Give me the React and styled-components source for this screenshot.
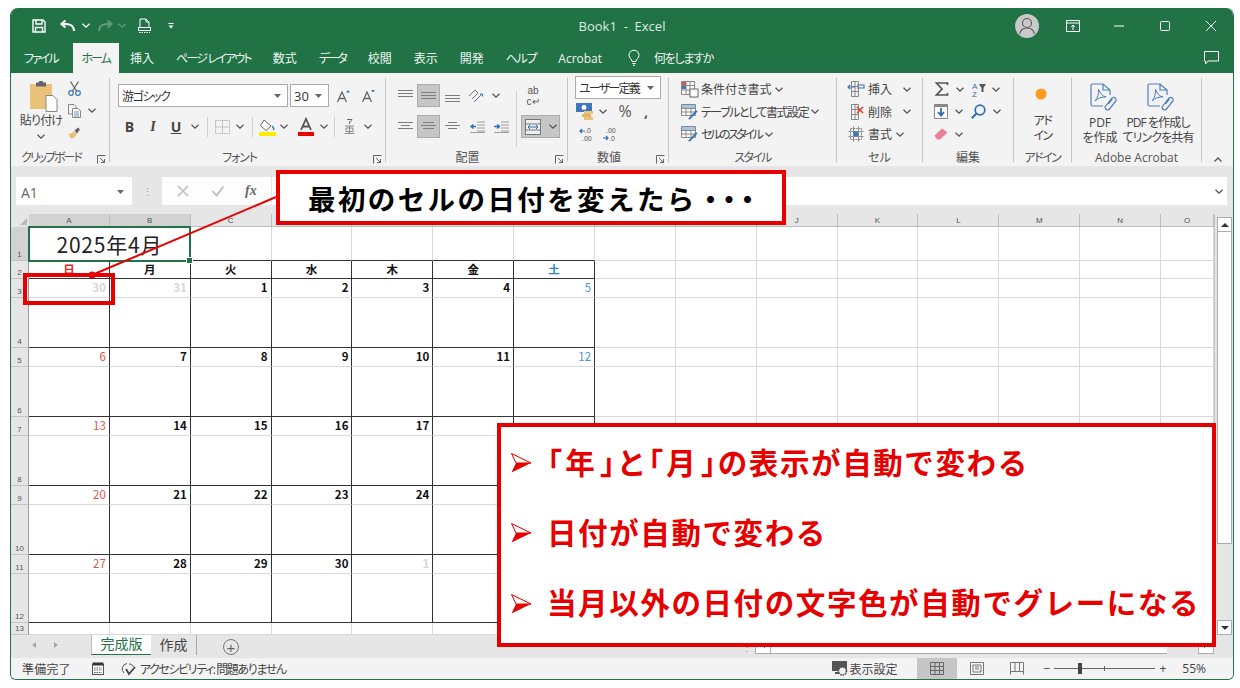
import styled, { createGlobalStyle } from "styled-components"

const GREEN = "#217346"
const RED = "#e60000"
const UI_FONT = `"Open Sans", "Noto Sans CJK JP", sans-serif`
const CJK_FONT = `"Noto Sans CJK JP", sans-serif`

const GlobalStyle = createGlobalStyle`
  html, body { margin: 0; padding: 0; background: #fff; }
  body { font-family: ${UI_FONT}; font-feature-settings: "palt"; color: #444; }
  * { box-sizing: border-box; }
`

/* ---------- small drawings ---------- */

const Svg = styled.svg`
  display: block;
  flex: none;
  overflow: visible;
`

const Chevron = ({ color = "#555", up }) => (
  <Svg width="8" height="5" viewBox="0 0 8 5">
    <polyline points={up ? "0.5,4.5 4,1 7.5,4.5" : "0.5,0.8 4,4.2 7.5,0.8"} fill="none" stroke={color} strokeWidth="1.3" />
  </Svg>
)

const DropArrow = () => (
  <Svg width="7" height="4" viewBox="0 0 7 4"><polygon points="0,0 7,0 3.5,4" fill="#666" /></Svg>
)

const Launcher = () => (
  <Svg width="9" height="9" viewBox="0 0 9 9">
    <path d="M0.5 8.5V0.5H8.5M3 3L7.5 7.5M7.5 4V7.5H4" fill="none" stroke="#666" strokeWidth="1" />
  </Svg>
)

const SaveIcon = () => (
  <Svg width="14" height="14" viewBox="0 0 14 14">
    <path d="M1 1H11L13 3V13H1Z M4 1V5H10V1 M3.5 13V8.5H10.5V13" fill="none" stroke="#fff" strokeWidth="1.4" />
  </Svg>
)

const UndoIcon = ({ color = "#fff" }) => (
  <Svg width="15" height="12" viewBox="0 0 15 12">
    <path d="M14 11C14 6 10 4 6 4H2M5.5 0.5L1.5 4L5.5 7.5" fill="none" stroke={color} strokeWidth="2" />
  </Svg>
)

const RedoIcon = () => (
  <Svg width="15" height="12" viewBox="0 0 15 12">
    <path d="M1 11C1 6 5 4 9 4H13M9.5 0.5L13.5 4L9.5 7.5" fill="none" stroke="#5f9c7b" strokeWidth="2" />
  </Svg>
)

const PreviewIcon = () => (
  <Svg width="13" height="15" viewBox="0 0 13 15">
    <path d="M2 9V1H8L11 4V9M8 1V4H11" fill="none" stroke="#fff" strokeWidth="1" />
    <rect x="0.5" y="9.5" width="12" height="3" fill="none" stroke="#fff" />
    <path d="M1 14.5H12" stroke="#fff" strokeDasharray="1.5 1" />
  </Svg>
)

const CustomizeIcon = () => (
  <Svg width="6" height="6" viewBox="0 0 6 6">
    <path d="M0.5 0.5H5.5" stroke="#fff" />
    <polygon points="0.5,2.5 5.5,2.5 3,5.5" fill="#fff" />
  </Svg>
)

const AvatarIcon = () => (
  <Svg width="24" height="24" viewBox="0 0 24 24">
    <circle cx="12" cy="12" r="12" fill="#c9c9c9" />
    <circle cx="12" cy="9" r="4.5" fill="none" stroke="#555" strokeWidth="1.1" />
    <path d="M4.5 20C5.5 15.5 8 14 12 14S18.5 15.5 19.5 20" fill="none" stroke="#555" strokeWidth="1.1" />
  </Svg>
)

const RibbonModeIcon = () => (
  <Svg width="14" height="12" viewBox="0 0 14 12">
    <path d="M0.5 0.5H13.5V11.5H0.5ZM0.5 3H13.5M7 10V5M5 7L7 5L9 7" fill="none" stroke="#fff" />
  </Svg>
)

const WinIcon = ({ kind }) => (
  <Svg width="12" height="12" viewBox="0 0 12 12">
    {kind === "min" && <path d="M1 6H11" stroke="#fff" />}
    {kind === "max" && <rect x="1.5" y="1.5" width="9" height="9" rx="1" fill="none" stroke="#fff" />}
    {kind === "close" && <path d="M1 1L11 11M11 1L1 11" stroke="#fff" />}
  </Svg>
)

const CommentIcon = () => (
  <Svg width="15" height="14" viewBox="0 0 15 14">
    <path d="M0.5 0.5H14.5V10H4L1.5 13V10H0.5Z" fill="none" stroke="#fff" />
  </Svg>
)

const BulbIcon = () => (
  <Svg width="12" height="16" viewBox="0 0 12 16">
    <path d="M4 11.5C4 9 1 8 1 5.2A5 5 0 0 1 11 5.2C11 8 8 9 8 11.5ZM4.3 13.5H7.7M5 15.3H7" fill="none" stroke="#fff" />
  </Svg>
)

const PasteIcon = () => (
  <Svg width="28" height="31" viewBox="0 0 28 31">
    <rect x="0" y="3" width="22" height="25" fill="#eac27a" />
    <rect x="6" y="1.5" width="10" height="4" fill="#666" />
    <rect x="9" y="0" width="4" height="3" fill="#666" />
    <path d="M16 14.5H23L27 18.5V30.5H16Z" fill="#fff" stroke="#888" />
  </Svg>
)

const ScissorsIcon = () => (
  <Svg width="13" height="15" viewBox="0 0 13 15">
    <path d="M2.5 0.5L8.5 10M10.5 0.5L4.5 10" stroke="#666" strokeWidth="1.3" />
    <circle cx="3" cy="12" r="2.3" fill="none" stroke="#3f76b5" strokeWidth="1.2" />
    <circle cx="10" cy="12" r="2.3" fill="none" stroke="#3f76b5" strokeWidth="1.2" />
  </Svg>
)

const CopyIcon = () => (
  <Svg width="13" height="14" viewBox="0 0 13 14">
    <path d="M0.5 0.5H6L8 2.5V10H0.5Z" fill="#f3f3f3" stroke="#888" />
    <path d="M4.5 4.5H10L12.5 7V13.5H4.5Z" fill="#fff" stroke="#888" />
    <path d="M6 8H11M6 10H11M6 12H11" stroke="#6b8fb8" />
  </Svg>
)

const BrushIcon = () => (
  <Svg width="13" height="12" viewBox="0 0 13 12">
    <path d="M0 7C3 7 5 5 6 4L9 7C8 9 5 12 3 11.5Z" fill="#e9bf78" />
    <path d="M6.5 3.5L10 0.5L12 2.5L9 6.5Z" fill="#666" />
  </Svg>
)

const BorderIcon = () => (
  <Svg width="15" height="14" viewBox="0 0 15 14">
    <path d="M0.5 0.5H14.5V13.5H0.5ZM7.5 0.5V13.5M0.5 7H14.5" fill="none" stroke="#b5b5b5" strokeDasharray="1.5 0.7" />
  </Svg>
)

const FillIcon = () => (
  <Svg width="17" height="18" viewBox="0 0 17 18">
    <path d="M5 2L12 8L7 12.5L1.5 7.5Z" fill="#fff" stroke="#666" />
    <path d="M13 8Q15.5 10 14.5 12" fill="none" stroke="#3f76b5" strokeWidth="1.5" />
    <rect x="0" y="14" width="17" height="4" fill="#ffeb00" />
  </Svg>
)

const FontColorIcon = () => (
  <Svg width="16" height="18" viewBox="0 0 16 18">
    <path d="M3 12L8 1L13 12M5 8.5H11" fill="none" stroke="#555" strokeWidth="1.8" />
    <rect x="0" y="14" width="16" height="4" fill={RED} />
  </Svg>
)

const GrowFontIcon = ({ down }) => (
  <Svg width="14" height="14" viewBox="0 0 14 14">
    <path d="M0.5 13L5 3L9.5 13M2.3 9.5H7.7" fill="none" stroke="#666" strokeWidth="1.3" />
    <polygon points={down ? "9,1 13,1 11,3.5" : "9,3.5 13,3.5 11,1"} fill="#3f76b5" />
  </Svg>
)

const PhoneticIcon = () => (
  <Svg width="11" height="15" viewBox="0 0 11 15">
    <path d="M3 0.5H8C7.5 2 6.5 3 5 3.5M5.5 2.5V5" fill="none" stroke="#666" />
    <path d="M1 7H10M2 9H9V12.5H2ZM5.5 7V14.5M0.5 14.5H10.5" fill="none" stroke="#888" />
  </Svg>
)

// horizontal text lines, used for the alignment buttons
const LinesIcon = ({ rows, inset = [0, 0, 0], height = 12 }) => (
  <Svg width="15" height={height} viewBox={`0 0 15 ${height}`}>
    {rows.map((y, i) => (
      <path key={y} d={`M${inset[i]} ${y}H${15 - inset[i]}`} stroke="#7d7d7d" />
    ))}
  </Svg>
)

const OrientIcon = () => (
  <Svg width="18" height="14" viewBox="0 0 18 14">
    <path d="M1 7L7 1L10 4L4 10" fill="none" stroke="#777" />
    <path d="M6 13L14 5M12 5H14.5V7.5" fill="none" stroke="#3f76b5" />
  </Svg>
)

const IndentIcon = ({ inc }) => (
  <Svg width="15" height="12" viewBox="0 0 15 12">
    <path d="M7 1H15M7 4H15M7 7H15M7 10H15M0 11.5H15" stroke="#888" strokeWidth="0.8" />
    <path d={inc ? "M0 5.5H5M3 3.5L5.5 5.5L3 7.5" : "M6 5.5H1M3.5 3.5L1 5.5L3.5 7.5"} fill="none" stroke="#2d6db3" strokeWidth="1.4" />
  </Svg>
)

const MergeIcon = () => (
  <Svg width="16" height="16" viewBox="0 0 16 16">
    <rect x="0.5" y="0.5" width="15" height="15" fill="#eee" stroke="#777" />
    <path d="M0.5 5H15.5M0.5 11H15.5" stroke="#777" />
    <path d="M3 8H13M5 6L3 8L5 10M11 6L13 8L11 10" fill="none" stroke="#2d6db3" />
  </Svg>
)

const AccountingIcon = () => (
  <Svg width="18" height="17" viewBox="0 0 18 17">
    <rect x="0" y="0" width="16" height="9" fill="#3f76b5" />
    <circle cx="8" cy="4.5" r="2.4" fill="#fff" />
    <rect x="8" y="8" width="9" height="3" fill="#eac27a" />
    <rect x="6" y="11" width="9" height="3" fill="#e4b45f" />
    <rect x="8" y="14" width="9" height="3" fill="#eac27a" />
  </Svg>
)

const DecimalIcon = ({ more }) => (
  <Svg width="14" height="15" viewBox="0 0 14 15">
    <text x={more ? 3 : 5} y="6" fontSize="7" fill="#555" fontFamily="Liberation Sans">{more ? ".00" : ".0"}</text>
    <text x={more ? 6 : 2} y="14" fontSize="7" fill="#555" fontFamily="Liberation Sans">{more ? ".0" : ".00"}</text>
    <path d={more ? "M0 11H5M3 9L5 11L3 13" : "M0 4H5M2 2L0 4L2 6"} fill="none" stroke="#2d6db3" strokeWidth="1.2" />
  </Svg>
)

const CondFormatIcon = () => (
  <Svg width="17" height="16" viewBox="0 0 17 16">
    <path d="M0.5 0.5H13.5V13.5H0.5ZM0.5 4.5H13.5M0.5 9H13.5M5 0.5V13.5M9 0.5V13.5" fill="#fff" stroke="#888" />
    <rect x="1" y="1" width="4" height="3" fill="#d9534f" />
    <rect x="1" y="5" width="4" height="3" fill="#3f76b5" />
    <rect x="9" y="8" width="8" height="8" fill="#fff" stroke="#666" />
  </Svg>
)

const StyleTableIcon = () => (
  <Svg width="17" height="16" viewBox="0 0 17 16">
    <path d="M0.5 0.5H14.5V11.5H0.5ZM0.5 4.5H14.5M0.5 8H14.5M5 0.5V11.5M10 0.5V11.5" fill="#fff" stroke="#888" />
    <rect x="1" y="1" width="13" height="3" fill="#a8c4e3" />
    <path d="M7 15L15 6L16.5 7.5L9 15.5Z" fill="#3f76b5" />
  </Svg>
)

const CellOpIcon = ({ kind }) => (
  <Svg width="16" height="16" viewBox="0 0 16 16">
    {kind === "format" ? (
      <>
        <path d="M2.5 2.5H13.5V13.5H2.5ZM0.5 5.5H15.5M0.5 10.5H15.5M5.5 0.5V15.5M10.5 0.5V15.5" fill="none" stroke="#888" strokeDasharray="2 0.6" />
        <rect x="5.5" y="5.5" width="5" height="5" fill="#3f76b5" />
      </>
    ) : (
      <>
        <path d="M3.5 0.5H10.5V15.5H3.5ZM3.5 5.5H10.5M3.5 10.5H10.5M7 0.5V15.5" fill="none" stroke="#888" />
        {kind === "insert" && <path d="M0 6H7M2 4L0 6L2 8M9 4H16V7H9" fill="none" stroke="#3f76b5" strokeWidth="1.1" />}
        {kind === "delete" && <path d="M9 3L15 9M15 3L9 9" stroke="#d9452f" strokeWidth="1.6" />}
      </>
    )}
  </Svg>
)

const SigmaIcon = () => (
  <Svg width="13" height="14" viewBox="0 0 13 14">
    <path d="M12.5 3V1H1.5L7 7L1.5 13H12.5V11" fill="none" stroke="#555" strokeWidth="1.7" />
  </Svg>
)

const SortIcon = () => (
  <Svg width="15" height="15" viewBox="0 0 15 15">
    <text x="0" y="7" fontSize="8" fill="#2d6db3" fontFamily="Liberation Sans">A</text>
    <text x="0" y="15" fontSize="8" fill="#2d6db3" fontFamily="Liberation Sans">Z</text>
    <polygon points="7,2 14,2 11.5,6 11.5,10 9.5,10 9.5,6" fill="#555" />
  </Svg>
)

const FillDownIcon = () => (
  <Svg width="14" height="15" viewBox="0 0 14 15">
    <rect x="0.5" y="0.5" width="13" height="14" fill="#fff" stroke="#888" />
    <rect x="0.5" y="0.5" width="13" height="2.5" fill="#888" />
    <path d="M7 4V11M4 8L7 11.5L10 8" fill="none" stroke="#2d6db3" strokeWidth="1.8" />
  </Svg>
)

const FindIcon = () => (
  <Svg width="15" height="15" viewBox="0 0 15 15">
    <circle cx="9" cy="6" r="4.8" fill="none" stroke="#2d6db3" strokeWidth="1.7" />
    <path d="M5.5 9.5L0.8 14.2" stroke="#2d6db3" strokeWidth="2" />
  </Svg>
)

const EraserIcon = () => (
  <Svg width="14" height="12" viewBox="0 0 14 12">
    <path d="M0.5 7.5L8 0.5L13.5 4.5L6 11.5H3Z" fill="#e8819a" />
  </Svg>
)

const AddinIcon = () => (
  <Svg width="12" height="12" viewBox="0 0 12 12"><circle cx="6" cy="6" r="5.5" fill="#ff9a1f" /></Svg>
)

const PdfIcon = () => (
  <Svg width="27" height="28" viewBox="0 0 27 28">
    <path d="M13 23H2.5A1.5 1.5 0 0 1 1 21.5V2.5A1.5 1.5 0 0 1 2.5 1H13L20 7V12M13 1V7H20" fill="none" stroke="#4f7fc0" strokeWidth="1.2" />
    <path d="M5 18C7.5 15.5 9 10 8.5 6.5C10 10 12 13 16 14C12 13.7 8 15 5 18Z" fill="none" stroke="#4f7fc0" />
    <path d="M15 24L22 15A2.6 2.6 0 0 1 26 18L19.5 26A2.6 2.6 0 0 1 15 24Z M18.5 21L22.5 16" fill="none" stroke="#4f7fc0" strokeWidth="1.2" />
  </Svg>
)

const DimMark = ({ mark }) => (
  <Svg width="14" height="12" viewBox="0 0 14 12">
    {mark === "x"
      ? <path d="M2 1L12 11M12 1L2 11" stroke="#bdbdbd" strokeWidth="1.6" />
      : <path d="M1.5 6L5.5 10.5L12.5 1.5" fill="none" stroke="#bdbdbd" strokeWidth="1.8" />}
  </Svg>
)

const MacroIcon = () => (
  <Svg width="12" height="13" viewBox="0 0 12 13">
    <rect x="0.5" y="2.5" width="11" height="10" fill="#fff" stroke="#555" />
    <rect x="0.5" y="0.5" width="11" height="3" fill="#333" />
    <path d="M2 6H10M2 8H10M2 10.5H10" stroke="#555" strokeDasharray="1.5 1" />
  </Svg>
)

const AccessIcon = () => (
  <Svg width="15" height="14" viewBox="0 0 15 14">
    <path d="M6 1.5A5.5 5.5 0 0 0 3 11" fill="none" stroke="#555" />
    <path d="M8 2C10 2 12 3 12.5 5" fill="none" stroke="#555" />
    <path d="M5 7L8 12L14 5" fill="none" stroke="#444" strokeWidth="1.8" />
  </Svg>
)

const DisplayIcon = () => (
  <Svg width="16" height="15" viewBox="0 0 16 15">
    <rect x="0" y="0" width="15" height="10" fill="#555" />
    <circle cx="10.5" cy="10" r="4" fill="#f3f3f3" stroke="#444" strokeWidth="1.5" strokeDasharray="1.5 0.8" />
    <rect x="3" y="11" width="4" height="2" fill="#555" />
  </Svg>
)

const ViewIcon = ({ kind }) => (
  <Svg width="14" height="13" viewBox="0 0 14 13">
    {kind === "normal" && <path d="M0.5 0.5H13.5V12.5H0.5ZM0.5 4.5H13.5M0.5 8.5H13.5M5 0.5V12.5M9.5 0.5V12.5" fill="none" stroke="#666" />}
    {kind === "layout" && <path d="M0.5 0.5H13.5V12.5H0.5ZM3 3H11V10H3ZM5 5H9M5 7H9" fill="none" stroke="#777" />}
    {kind === "break" && <path d="M0.5 12.5V0.5H13.5V12.5M0.5 9.5H13.5M5 0.5V9.5M9.5 0.5V9.5" fill="none" stroke="#777" />}
  </Svg>
)

const BulletArrow = () => (
  <Svg width="20" height="20" viewBox="0 0 20 20">
    <path d="M0.5 0.5L20 10L0.5 19.5L5 10Z" fill={RED} />
    <path d="M0.5 0.5L20 10L5 10Z" fill="#fff" stroke={RED} strokeWidth="1" />
  </Svg>
)

/* ---------- window chrome ---------- */

const Window = styled.div`
  position: relative;
  width: 1224px;
  height: 672px;
  margin: 8px 0 0 10px;
  display: flex;
  flex-direction: column;
  background: #f3f3f3;
  border: 1px solid ${GREEN};
  border-top: none;
  border-radius: 8px 8px 6px 6px;
  overflow: hidden;
`

const TitleBar = styled.div`
  height: 35px;
  flex: none;
  margin: 0 -1px;
  display: grid;
  grid-template-columns: 1fr auto 1fr;
  align-items: center;
  background: ${GREEN};
  color: #dfeae4;
`

const Qat = styled.div`
  display: flex;
  align-items: center;
  padding-left: 15px;
`

const Slot = styled.div`
  width: ${(p) => p.$w}px;
  flex: none;
  display: flex;
  align-items: center;
  justify-content: center;
`

const Title = styled.div`
  font-size: 13px;
  white-space: pre;
`

const WinControls = styled.div`
  display: flex;
  align-items: center;
  justify-content: flex-end;
`

const TabsBar = styled.div`
  height: 30px;
  flex: none;
  margin: 0 -1px;
  padding-left: 3px;
  display: flex;
  align-items: stretch;
  background: ${GREEN};
`

const Tab = styled.div`
  display: flex;
  align-items: center;
  gap: 14px;
  padding: ${(p) => (p.$active ? "0 9px" : "0 11px")};
  margin-left: ${(p) => (p.$active ? 4 : p.$gap || 0)}px;
  font-size: 12px;
  letter-spacing: ${(p) => p.$spacing || 0}px;
  white-space: nowrap;
  color: ${(p) => (p.$active ? GREEN : "#f0f5f2")};
  background: ${(p) => (p.$active ? "#f3f3f3" : "transparent")};
`

const TabsEnd = styled.div`
  margin-left: auto;
  width: 46px;
  display: flex;
  align-items: center;
  justify-content: center;
`

/* ---------- ribbon ---------- */

const Ribbon = styled.div`
  height: 93px;
  flex: none;
  padding: 5px 0 4px;
  display: flex;
  background: #f3f3f3;
`

const Group = styled.section`
  width: ${(p) => p.$w}px;
  flex: none;
  height: 84px;
  display: flex;
  flex-direction: column;
  border-right: 1px solid #c6c6c6;
`

const GroupBody = styled.div`
  height: 76px;
  flex: none;
  padding: ${(p) => p.$top ?? 6}px 0 0 ${(p) => p.$left ?? 0}px;
  display: flex;
  flex-direction: ${(p) => p.$dir || "column"};
  gap: ${(p) => p.$gap ?? 0}px;
  align-items: ${(p) => p.$align || "stretch"};
`

const GroupLabel = styled.div`
  position: relative;
  height: 8px;
  padding-right: ${(p) => p.$pr ?? 0}px;
  line-height: 8px;
  font-size: 12px;
  letter-spacing: ${(p) => p.$spacing ?? 0}px;
  text-align: center;
  white-space: nowrap;
  color: #555;
`

const LauncherSlot = styled.span`
  position: absolute;
  right: 3px;
  top: 1px;
`

const ToolColumn = styled.div`
  display: flex;
  flex-direction: column;
  gap: 8px;
`

const ToolRow = styled.div`
  height: ${(p) => p.$h || 23}px;
  flex: none;
  display: flex;
  align-items: center;
`

const Combo = styled.div`
  width: ${(p) => p.$w}px;
  height: 23px;
  flex: none;
  margin-top: ${(p) => p.$mt ?? 0}px;
  display: flex;
  align-items: center;
  justify-content: space-between;
  padding: 0 6px 0 3px;
  background: #fff;
  border: 1px solid #ababab;
  font-size: ${(p) => p.$size || 12}px;
  color: #333;
  white-space: nowrap;
`

const ComboText = styled.span`
  letter-spacing: ${(p) => p.$spacing ?? 0}px;
`

const ToolSep = styled.div`
  width: 1px;
  height: ${(p) => p.$h || 20}px;
  background: #d0d0d0;
`

const PressedButton = styled.div`
  width: ${(p) => p.$w}px;
  height: 23px;
  flex: none;
  display: flex;
  align-items: center;
  justify-content: center;
  gap: 8px;
  background: #c6c6c6;
  border: 1px solid #ababab;
`

const BoldMark = styled.span`
  font-family: ${(p) => (p.$italic ? `"Liberation Serif", serif` : `"Open Sans", sans-serif`)};
  font-size: 14px;
  font-weight: 700;
  font-style: ${(p) => (p.$italic ? "italic" : "normal")};
  text-decoration: ${(p) => (p.$under ? "underline" : "none")};
  color: #444;
`

const Percent = styled.span`
  font-size: ${(p) => p.$size || 16}px;
  color: #555;
  font-weight: ${(p) => p.$weight || 400};
`

const WrapText = styled.span`
  font-family: "Liberation Sans", sans-serif;
  font-size: 10px;
  line-height: 11px;
  text-align: center;
  color: #555;
`

const PasteButton = styled.div`
  width: 60px;
  flex: none;
  display: flex;
  flex-direction: column;
  align-items: center;
  padding-top: 3px;
  font-size: 12px;
  color: #444;
`

// moves a big button's drawing off the centre line of its caption
const NudgedIcon = styled.div`
  margin-left: ${(p) => p.$ml}px;
`

const PasteText = styled.span`
  margin: 1px 0 6px;
  line-height: 15px;
  letter-spacing: -0.8px;
  white-space: nowrap;
`

const SmallTools = styled.div`
  display: flex;
  flex-direction: column;
  width: 40px;
  margin-left: -3px;
`

const SmallTool = styled.div`
  height: ${(p) => p.$h}px;
  display: flex;
  align-items: center;
  gap: 7px;
`

const LabelRow = styled.div`
  height: 22.5px;
  flex: none;
  display: flex;
  align-items: center;
  gap: ${(p) => p.$gap ?? 3}px;
  font-size: 12px;
  color: #444;
  white-space: nowrap;
`

const RowText = styled.span`
  letter-spacing: ${(p) => p.$spacing ?? 0}px;
`

const BigText = styled.div`
  font-size: 12px;
  line-height: 15px;
  letter-spacing: ${(p) => p.$spacing ?? 0}px;
  text-align: center;
  white-space: nowrap;
  color: #444;
`

const BigButton = styled.div`
  width: ${(p) => p.$w}px;
  flex: none;
  display: flex;
  flex-direction: column;
  align-items: center;
  gap: ${(p) => p.$gap ?? 4}px;
`

const CollapseSlot = styled.div`
  flex: 1;
  height: 84px;
  display: flex;
  align-items: flex-end;
  justify-content: center;
`

/* ---------- formula bar ---------- */

const FormulaBar = styled.div`
  height: 48px;
  flex: none;
  padding: 11px 6px 9px 5px;
  display: flex;
  align-items: stretch;
  background: #e6e6e6;
`

const NameBox = styled.div`
  width: 116px;
  flex: none;
  padding: 2px 8px 0 5px;
  display: flex;
  align-items: center;
  justify-content: space-between;
  background: #fff;
  font-size: 14px;
  color: #666;
`

const FormulaDots = styled.div`
  width: 30px;
  flex: none;
  display: flex;
  align-items: center;
  justify-content: center;
  color: #999;
  font-size: 11px;
`

const FormulaButtons = styled.div`
  width: 110px;
  flex: none;
  display: flex;
  align-items: center;
  justify-content: space-around;
  padding: 0 4px;
  background: #fdfdfd;
  border-right: 1px solid #e6e6e6;
`

const FxMark = styled.span`
  font-family: "Liberation Serif", serif;
  font-style: italic;
  font-weight: 700;
  font-size: 14px;
  color: #666;
`

const FormulaInput = styled.div`
  flex: 1;
  display: flex;
  align-items: center;
  justify-content: flex-end;
  padding-right: 4px;
  background: #fff;
`

/* ---------- sheet ---------- */

const SheetArea = styled.div`
  height: 421px;
  flex: none;
  display: flex;
`

const SheetGrid = styled.div`
  width: 1203px;
  flex: none;
  display: grid;
  grid-template-columns: 18px repeat(14, 80.86px) 53px;
  grid-template-rows: 13px ${(p) => p.$rows.map((h) => `${h}px`).join(" ")};
  background: #fff;
  overflow: hidden;
`

const Corner = styled.div`
  background: #e6e6e6;
  position: relative;
  &::after {
    content: "";
    position: absolute;
    right: 2px;
    bottom: 2px;
    border-style: solid;
    border-width: 0 0 7px 7px;
    border-color: transparent transparent #b9b9b9 transparent;
  }
`

const ColHead = styled.div`
  display: flex;
  align-items: center;
  justify-content: center;
  font-family: "Liberation Sans", sans-serif;
  font-size: 8px;
  color: #555;
  background: ${(p) => (p.$selected ? "#d2d2d2" : "#e6e6e6")};
  border-right: 1px solid #bdbdbd;
  border-bottom: 1px solid ${(p) => (p.$selected ? GREEN : "#bdbdbd")};
`

const RowHead = styled.div`
  display: flex;
  align-items: flex-end;
  justify-content: center;
  font-family: "Liberation Sans", sans-serif;
  font-size: 8px;
  line-height: 11px;
  color: #555;
  background: ${(p) => (p.$selected ? "#d2d2d2" : "#e6e6e6")};
  border-right: 1px solid ${(p) => (p.$selected ? GREEN : "#9a9a9a")};
  border-bottom: 1px solid #c4c4c4;
`

const Cell = styled.div`
  border-right: 1px solid ${(p) => (p.$darkRight ? "#333" : "#d9d9d9")};
  border-bottom: 1px solid ${(p) => (p.$darkBottom ? "#333" : "#d9d9d9")};
  font-family: ${CJK_FONT};
  font-feature-settings: normal;
  font-size: 11.5px;
  line-height: 17px;
  font-weight: ${(p) => (p.$bold ? 700 : 400)};
  color: ${(p) => p.$color || "#111"};
  text-align: ${(p) => p.$align || "right"};
  padding-right: ${(p) => (p.$align === "center" ? 0 : 3)}px;
`

const MergedTitle = styled.div`
  grid-column: span 2;
  position: relative;
  display: flex;
  align-items: center;
  justify-content: center;
  border: 2px solid ${GREEN};
  margin: -1px 0 -1px -1px;
  font-family: ${CJK_FONT};
  font-feature-settings: normal;
  font-size: 21px;
  letter-spacing: 0.8px;
  color: #222;
  background: #fff;
  &::after {
    content: "";
    position: absolute;
    right: -4px;
    bottom: -4px;
    width: 5px;
    height: 5px;
    background: ${GREEN};
    border: 1px solid #fff;
  }
`

const VScroll = styled.div`
  flex: 1;
  padding: 3px 2px 0;
  display: flex;
  flex-direction: column;
  background: #e6e6e6;
  border-left: 1px solid #c2c2c2;
`

const ScrollBtn = styled.div`
  width: ${(p) => p.$w || 15}px;
  height: ${(p) => p.$h || 15}px;
  flex: none;
  margin-top: ${(p) => (p.$end ? "auto" : 0)};
  display: flex;
  align-items: center;
  justify-content: center;
  background: #fff;
  border: 1px solid #ababab;
`

const ScrollThumb = styled.div`
  height: 312px;
  flex: none;
  background: #fff;
  border: 1px solid #ababab;
  border-top: none;
`

const Tri = styled.span`
  width: 0;
  height: 0;
  border-style: solid;
  border-width: ${(p) => ({ up: "0 4px 4px", down: "4px 4px 0", left: "3px 4px 3px 0", right: "3px 0 3px 4px" })[p.$dir]};
  border-color: ${(p) => ({ up: "transparent transparent #333", down: "#333 transparent transparent", left: "transparent #333 transparent transparent", right: "transparent transparent transparent #333" })[p.$dir]};
`

/* ---------- sheet tabs and status bar ---------- */

const SheetTabs = styled.div`
  height: 23px;
  flex: none;
  padding-right: 19px;
  display: flex;
  align-items: flex-start;
  background: #e6e6e6;
`

const TabNav = styled.div`
  width: 80px;
  height: 20px;
  flex: none;
  display: flex;
  align-items: center;
  gap: 18px;
  padding-left: 21px;
  opacity: 0.35;
`

const SheetTab = styled.div`
  height: 20px;
  width: ${(p) => p.$w}px;
  flex: none;
  padding-bottom: 3px;
  display: flex;
  align-items: center;
  justify-content: center;
  font-size: 14px;
  color: ${(p) => (p.$active ? GREEN : "#444")};
  background: ${(p) => (p.$active ? "#fff" : "transparent")};
  border-left: ${(p) => (p.$active ? "1px solid #bdbdbd" : "none")};
  border-bottom: ${(p) => (p.$active ? `1px solid ${GREEN}` : "none")};
  border-right: ${(p) => (p.$last ? "1px solid #aaa" : "none")};
  margin-right: ${(p) => (p.$last ? 26 : 0)}px;
`

const AddSheet = styled.div`
  width: 16px;
  height: 16px;
  margin-top: 4px;
  flex: none;
  display: flex;
  align-items: center;
  justify-content: center;
  border: 1px solid #777;
  border-radius: 50%;
  font-size: 15px;
  line-height: 1;
  color: #666;
  font-family: "Liberation Sans", sans-serif;
`

const HScroll = styled.div`
  margin-left: auto;
  width: 472px;
  height: 19px;
  flex: none;
  display: flex;
  align-items: stretch;
`

const HDots = styled.div`
  width: 13px;
  flex: none;
  color: #999;
  font-size: 10px;
  line-height: 24px;
`

const HThumb = styled.div`
  width: 396px;
  flex: none;
  background: #fff;
  border-bottom: 1px solid #ababab;
`

const HTrack = styled.div`
  flex: 1;
`

const StatusBar = styled.div`
  height: 21px;
  flex: none;
  display: flex;
  align-items: stretch;
  background: #f3f3f3;
  font-size: 12px;
  color: #444;
  white-space: nowrap;
`

const StatusText = styled.div`
  display: flex;
  align-items: center;
  gap: ${(p) => p.$gap ?? 0}px;
  margin-left: ${(p) => p.$ml ?? 0}px;
  letter-spacing: ${(p) => p.$spacing ?? 0}px;
`

const StatusLabel = styled.span`
  letter-spacing: ${(p) => p.$spacing ?? 0}px;
`

const StatusRight = styled.div`
  margin-left: auto;
  display: flex;
  align-items: stretch;
  padding-right: 27px;
`

const ViewButton = styled.div`
  width: 40px;
  flex: none;
  margin-left: ${(p) => p.$ml ?? 0}px;
  display: flex;
  align-items: center;
  justify-content: center;
  background: ${(p) => (p.$active ? "#c6c6c6" : "transparent")};
`

const ZoomSlider = styled.div`
  width: 101px;
  margin: 0 4px;
  position: relative;
  align-self: center;
  height: 1px;
  background: #666;
`

const ZoomThumb = styled.span`
  position: absolute;
  left: 24px;
  top: -5px;
  width: 4px;
  height: 11px;
  background: #444;
`

const ZoomTick = styled.span`
  position: absolute;
  left: 50px;
  top: -2px;
  width: 1px;
  height: 5px;
  background: #666;
`

/* ---------- callouts over the sheet ---------- */

const Leader = styled.svg`
  position: absolute;
  left: 76px;
  top: 184px;
`

const RedFrame = styled.div`
  position: absolute;
  left: 12px;
  top: 265px;
  width: 92px;
  height: 32px;
  border: 4px solid ${RED};
`

const HeadCallout = styled.div`
  position: absolute;
  left: 265px;
  top: 162px;
  width: 510px;
  height: 55px;
  padding-left: 28px;
  display: flex;
  align-items: center;
  background: #fff;
  border: 4px solid ${RED};
  font-family: ${CJK_FONT};
  font-feature-settings: normal;
  font-size: 27.5px;
  font-weight: 700;
  letter-spacing: 2.4px;
  color: #000;
  white-space: nowrap;
`

const TrailingDots = styled.span`
  letter-spacing: -9px;
`

const NoteCallout = styled.div`
  position: absolute;
  left: 486px;
  top: 415px;
  width: 719px;
  height: 224px;
  padding: 1px 0 4px 10px;
  display: flex;
  flex-direction: column;
  background: #fff;
  border: 4px solid ${RED};
`

const NoteRow = styled.div`
  flex: 1;
  display: flex;
  align-items: center;
  gap: 16px;
  font-family: ${CJK_FONT};
  font-feature-settings: normal;
  font-size: 29.5px;
  font-weight: 700;
  letter-spacing: 1.6px;
  color: ${RED};
  white-space: nowrap;
`

const NoteText = styled.span`
  margin-bottom: 5px;
`

// the corner brackets sit tight against the text, as proportional glyphs
const Bracket = styled.span`
  font-feature-settings: "palt";
  padding-left: ${(p) => (p.$open ? 0 : 4)}px;
  padding-right: ${(p) => (p.$open ? 2 : 0)}px;
`

/* ---------- data ---------- */

const COLS = ["A", "B", "C", "D", "E", "F", "G", "H", "I", "J", "K", "L", "M", "N", "O"]
const ROW_HEIGHTS = [34, 18, 19, 50, 19, 50, 19, 50, 19, 50, 19, 49, 12]
const DAYS = [
  { t: "日", c: "#e0261f" },
  { t: "月" },
  { t: "火" },
  { t: "水" },
  { t: "木" },
  { t: "金" },
  { t: "土", c: "#2f86c9" },
]
// row number -> dates, "g" marks days outside the month; the last cells lie under the note box
const WEEKS = {
  3: [[30, "g"], [31, "g"], [1], [2], [3], [4], [5]],
  5: [[6], [7], [8], [9], [10], [11], [12]],
  7: [[13], [14], [15], [16], [17], [], []],
  9: [[20], [21], [22], [23], [24], [], []],
  11: [[27], [28], [29], [30], [1, "g"], [], []],
}
const TABS = [
  { name: "挿入" },
  { name: "ページ レイアウト", spacing: -1.8 },
  { name: "数式" },
  { name: "データ", spacing: -2.2 },
  { name: "校閲" },
  { name: "表示" },
  { name: "開発" },
  { name: "ヘルプ", spacing: -1.3 },
  { name: "Acrobat" },
]

function dateStyle(col, mark) {
  if (mark === "g") return { $color: "#d6d6d6", $bold: true }
  if (col === 0) return { $color: "#e2574c" }
  if (col === 6) return { $color: "#4b94cc" }
  return { $bold: true }
}

function renderCell(row, col) {
  const key = `${row}-${col}`
  const inCalendar = col < 7
  const darkRight = inCalendar && row >= 2 && row <= 12
  const darkBottom = inCalendar && [1, 2, 4, 6, 8, 10, 12].includes(row)
  if (row === 1 && col === 0) return <MergedTitle key={key}>2025年4月</MergedTitle>
  if (row === 1 && col === 1) return null
  if (row === 2 && inCalendar) {
    return (
      <Cell key={key} $darkRight $darkBottom $align="center" $bold $color={DAYS[col].c}>
        {DAYS[col].t}
      </Cell>
    )
  }
  if (WEEKS[row] && inCalendar) {
    const [num, mark] = WEEKS[row][col]
    return (
      <Cell key={key} $darkRight={darkRight} {...dateStyle(col, mark)}>
        {num}
      </Cell>
    )
  }
  return <Cell key={key} $darkRight={darkRight} $darkBottom={darkBottom} />
}

export default function App() {
  return (
    <>
      <GlobalStyle />
      <Window>
        <TitleBar>
          <Qat>
            <Slot $w={28}><SaveIcon /></Slot>
            <Slot $w={28}><UndoIcon /></Slot>
            <Slot $w={9}><Chevron color="#fff" /></Slot>
            <Slot $w={30}><RedoIcon /></Slot>
            <Slot $w={4}><Chevron color="#5f9c7b" /></Slot>
            <Slot $w={40}><PreviewIcon /></Slot>
            <Slot $w={14}><CustomizeIcon /></Slot>
          </Qat>
          <Title>Book1  -  Excel</Title>
          <WinControls>
            <Slot $w={46}><AvatarIcon /></Slot>
            <Slot $w={46}><RibbonModeIcon /></Slot>
            <Slot $w={46}><WinIcon kind="min" /></Slot>
            <Slot $w={46}><WinIcon kind="max" /></Slot>
            <Slot $w={46}><WinIcon kind="close" /></Slot>
          </WinControls>
        </TitleBar>

        <TabsBar>
          <Tab $spacing={-2}>ファイル</Tab>
          <Tab $active $spacing={-2}>ホーム</Tab>
          {TABS.map((t) => <Tab key={t.name} $spacing={t.spacing}>{t.name}</Tab>)}
          <Tab $gap={4} $spacing={-1.3}><BulbIcon />何をしますか</Tab>
          <TabsEnd><CommentIcon /></TabsEnd>
        </TabsBar>

        <Ribbon>
          <Group $w={99}>
            <GroupBody $dir="row" $top={0}>
              <PasteButton>
                <NudgedIcon $ml={5}><PasteIcon /></NudgedIcon>
                <PasteText>貼り付け</PasteText>
                <Chevron />
              </PasteButton>
              <SmallTools>
                <SmallTool $h={21}><ScissorsIcon /></SmallTool>
                <SmallTool $h={23}><CopyIcon /><Chevron /></SmallTool>
                <SmallTool $h={21}><BrushIcon /></SmallTool>
              </SmallTools>
            </GroupBody>
            <GroupLabel $pr={18} $spacing={-2}>クリップボード<LauncherSlot><Launcher /></LauncherSlot></GroupLabel>
          </Group>

          <Group $w={276}>
            <GroupBody $left={8} $gap={8}>
              <ToolRow>
                <Combo $w={170} $size={12}><ComboText $spacing={-1.4}>游ゴシック</ComboText><DropArrow /></Combo>
                <Slot $w={2} />
                <Combo $w={39} $size={13}>30<DropArrow /></Combo>
                <Slot $w={30}><GrowFontIcon /></Slot>
                <Slot $w={20}><GrowFontIcon down /></Slot>
              </ToolRow>
              <ToolRow>
                <Slot $w={23}><BoldMark>B</BoldMark></Slot>
                <Slot $w={24}><BoldMark $italic>I</BoldMark></Slot>
                <Slot $w={22}><BoldMark $under>U</BoldMark></Slot>
                <Slot $w={16}><Chevron /></Slot>
                <Slot $w={8}><ToolSep /></Slot>
                <Slot $w={22}><BorderIcon /></Slot>
                <Slot $w={14}><Chevron /></Slot>
                <Slot $w={10}><ToolSep /></Slot>
                <Slot $w={20}><FillIcon /></Slot>
                <Slot $w={14}><Chevron /></Slot>
                <Slot $w={30}><FontColorIcon /></Slot>
                <Slot $w={6}><Chevron /></Slot>
                <Slot $w={15}><ToolSep /></Slot>
                <Slot $w={14}><PhoneticIcon /></Slot>
                <Slot $w={24}><Chevron /></Slot>
              </ToolRow>
            </GroupBody>
            <GroupLabel $pr={16} $spacing={-1.2}>フォント<LauncherSlot><Launcher /></LauncherSlot></GroupLabel>
          </Group>

          <Group $w={182}>
            <GroupBody $dir="row" $left={7}>
              <ToolColumn>
                <ToolRow>
                  <Slot $w={24}><LinesIcon rows={[0.5, 3.5, 6.5]} /></Slot>
                  <PressedButton $w={23}><LinesIcon rows={[2.5, 5.5, 8.5]} /></PressedButton>
                  <Slot $w={24}><LinesIcon rows={[5.5, 8.5, 11.5]} /></Slot>
                  <Slot $w={26}><OrientIcon /></Slot>
                  <Slot $w={12}><Chevron /></Slot>
                </ToolRow>
                <ToolRow>
                  <Slot $w={24}><LinesIcon rows={[1.5, 4.5, 7.5]} inset={[0, 3, 0]} /></Slot>
                  <PressedButton $w={23}><LinesIcon rows={[1.5, 4.5, 7.5]} inset={[2, 0, 2]} /></PressedButton>
                  <Slot $w={24}><LinesIcon rows={[1.5, 4.5, 7.5]} inset={[3, 0, 3]} /></Slot>
                  <Slot $w={26}><IndentIcon /></Slot>
                  <Slot $w={22}><IndentIcon inc /></Slot>
                </ToolRow>
              </ToolColumn>
              <Slot $w={9}><ToolSep $h={56} /></Slot>
              <ToolColumn>
                <ToolRow>
                  <Slot $w={24}><WrapText>ab<br />c↵</WrapText></Slot>
                </ToolRow>
                <PressedButton $w={39}><MergeIcon /><Chevron /></PressedButton>
              </ToolColumn>
            </GroupBody>
            <GroupLabel $pr={18}>配置<LauncherSlot><Launcher /></LauncherSlot></GroupLabel>
          </Group>

          <Group $w={101}>
            <GroupBody $left={7} $top={0}>
              <Combo $w={86} $size={12} $mt={-2}><ComboText $spacing={-1.8}>ユーザー定義</ComboText><DropArrow /></Combo>
              <ToolRow $h={24}>
                <Slot $w={20}><AccountingIcon /></Slot>
                <Slot $w={16}><Chevron /></Slot>
                <Slot $w={28}><Percent>%</Percent></Slot>
                <Slot $w={14}><Percent $weight={700} $size={14}>,</Percent></Slot>
              </ToolRow>
              <ToolRow>
                <Slot $w={23}><DecimalIcon /></Slot>
                <Slot $w={23}><DecimalIcon more /></Slot>
              </ToolRow>
            </GroupBody>
            <GroupLabel $pr={18}>数値<LauncherSlot><Launcher /></LauncherSlot></GroupLabel>
          </Group>

          <Group $w={168}>
            <GroupBody $left={12} $top={0}>
              <LabelRow><CondFormatIcon /><RowText>条件付き書式</RowText><Chevron /></LabelRow>
              <LabelRow><StyleTableIcon /><RowText $spacing={-1.45}>テーブルとして書式設定</RowText><Chevron /></LabelRow>
              <LabelRow><StyleTableIcon /><RowText $spacing={-2.4}>セルのスタイル</RowText><Chevron /></LabelRow>
            </GroupBody>
            <GroupLabel $spacing={-1.7}>スタイル</GroupLabel>
          </Group>

          <Group $w={86}>
            <GroupBody $left={11} $top={0}>
              <LabelRow $gap={4}><CellOpIcon kind="insert" />挿入<Slot $w={22}><Chevron /></Slot></LabelRow>
              <LabelRow $gap={4}><CellOpIcon kind="delete" />削除<Slot $w={22}><Chevron /></Slot></LabelRow>
              <LabelRow $gap={4}><CellOpIcon kind="format" />書式<Chevron /></LabelRow>
            </GroupBody>
            <GroupLabel>セル</GroupLabel>
          </Group>

          <Group $w={91}>
            <GroupBody $left={7} $top={0}>
              <ToolRow $h={22.5}>
                <Slot $w={22}><SigmaIcon /></Slot>
                <Slot $w={16}><Chevron /></Slot>
                <Slot $w={22}><SortIcon /></Slot>
                <Slot $w={12}><Chevron /></Slot>
              </ToolRow>
              <ToolRow $h={22.5}>
                <Slot $w={22}><FillDownIcon /></Slot>
                <Slot $w={14}><Chevron /></Slot>
                <Slot $w={24}><FindIcon /></Slot>
                <Slot $w={14}><Chevron /></Slot>
              </ToolRow>
              <ToolRow $h={22.5}>
                <Slot $w={22}><EraserIcon /></Slot>
                <Slot $w={14}><Chevron /></Slot>
              </ToolRow>
            </GroupBody>
            <GroupLabel>編集</GroupLabel>
          </Group>

          <Group $w={58}>
            <GroupBody $top={10} $align="center">
              <BigButton $w={57} $gap={13}>
                <NudgedIcon $ml={-3}><AddinIcon /></NudgedIcon>
                <BigText $spacing={-1.5}>アド<br />イン</BigText>
              </BigButton>
            </GroupBody>
            <GroupLabel $spacing={-1.5}>アドイン</GroupLabel>
          </Group>

          <Group $w={130}>
            <GroupBody $dir="row" $top={5}>
              <BigButton $w={56}>
                <NudgedIcon $ml={6}><PdfIcon /></NudgedIcon>
                <BigText>PDF<br />を作成</BigText>
              </BigButton>
              <BigButton $w={60}>
                <NudgedIcon $ml={5}><PdfIcon /></NudgedIcon>
                <BigText $spacing={-0.9}>PDF を作成し<br />てリンクを共有</BigText>
              </BigButton>
            </GroupBody>
            <GroupLabel>Adobe Acrobat</GroupLabel>
          </Group>

          <CollapseSlot><Chevron up /></CollapseSlot>
        </Ribbon>

        <FormulaBar>
          <NameBox>A1<DropArrow /></NameBox>
          <FormulaDots>⋮</FormulaDots>
          <FormulaButtons>
            <DimMark mark="x" />
            <DimMark mark="check" />
            <FxMark>fx</FxMark>
          </FormulaButtons>
          <FormulaInput><Chevron /></FormulaInput>
        </FormulaBar>

        <SheetArea>
          <SheetGrid $rows={ROW_HEIGHTS}>
            <Corner />
            {COLS.map((c) => <ColHead key={c} $selected={c === "A" || c === "B"}>{c}</ColHead>)}
            {ROW_HEIGHTS.map((_, i) => {
              const row = i + 1
              return [
                <RowHead key={`h${row}`} $selected={row === 1}>{row}</RowHead>,
                ...COLS.map((_c, col) => renderCell(row, col)),
              ]
            })}
          </SheetGrid>
          <VScroll>
            <ScrollBtn><Tri $dir="up" /></ScrollBtn>
            <ScrollThumb />
            <ScrollBtn $end><Tri $dir="down" /></ScrollBtn>
          </VScroll>
        </SheetArea>

        <SheetTabs>
          <TabNav><Tri $dir="left" /><Tri $dir="right" /></TabNav>
          <SheetTab $active $w={60}>完成版</SheetTab>
          <SheetTab $w={46} $last>作成</SheetTab>
          <AddSheet>+</AddSheet>
          <HScroll>
            <HDots>⋮</HDots>
            <ScrollBtn $w={16} $h={19}><Tri $dir="left" /></ScrollBtn>
            <HThumb />
            <HTrack />
            <ScrollBtn $w={16} $h={19}><Tri $dir="right" /></ScrollBtn>
          </HScroll>
        </SheetTabs>

        <StatusBar>
          <StatusText $ml={11} $spacing={0.2}>準備完了</StatusText>
          <StatusText $ml={21}><MacroIcon /></StatusText>
          <StatusText $ml={17} $gap={4}><AccessIcon /><StatusLabel $spacing={-1.4}>アクセシビリティ: 問題ありません</StatusLabel></StatusText>
          <StatusRight>
            <StatusText $gap={2}><DisplayIcon />表示設定</StatusText>
            <ViewButton $active $ml={19}><ViewIcon kind="normal" /></ViewButton>
            <ViewButton><ViewIcon kind="layout" /></ViewButton>
            <ViewButton><ViewIcon kind="break" /></ViewButton>
            <StatusText $ml={7}>−</StatusText>
            <ZoomSlider><ZoomThumb /><ZoomTick /></ZoomSlider>
            <StatusText>+</StatusText>
            <StatusText $ml={16}>55%</StatusText>
          </StatusRight>
        </StatusBar>

        <Leader width="192" height="90" viewBox="0 0 192 90">
          <line x1="189" y1="5" x2="5" y2="83" stroke={RED} strokeWidth="2" />
          <circle cx="5" cy="83" r="3.5" fill={RED} />
        </Leader>
        <RedFrame />
        <HeadCallout>最初のセルの日付を変えたら<TrailingDots>・・・</TrailingDots></HeadCallout>
        <NoteCallout>
          <NoteRow>
            <BulletArrow />
            <NoteText>
              <Bracket $open>「</Bracket>年<Bracket>」</Bracket>と<Bracket $open>「</Bracket>月<Bracket>」</Bracket>の表示が自動で変わる
            </NoteText>
          </NoteRow>
          <NoteRow><BulletArrow /><NoteText>日付が自動で変わる</NoteText></NoteRow>
          <NoteRow><BulletArrow /><NoteText>当月以外の日付の文字色が自動でグレーになる</NoteText></NoteRow>
        </NoteCallout>
      </Window>
    </>
  )
}
